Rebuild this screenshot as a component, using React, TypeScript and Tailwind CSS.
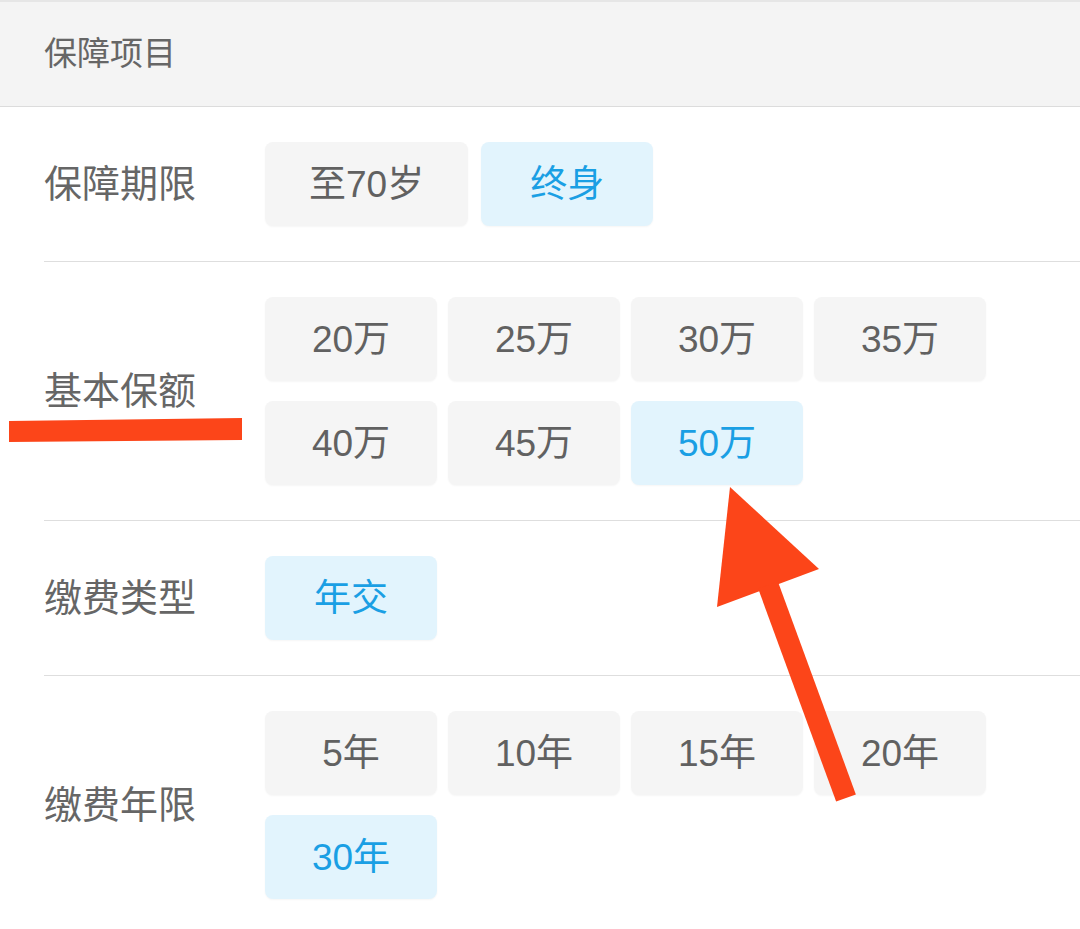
import React from 'react';

type Row = {
  label: string;
  options: string[];
  selected: string;
  wide?: boolean;
};

const rows: Row[] = [
  { label: '保障期限', options: ['至70岁', '终身'], selected: '终身', wide: true },
  {
    label: '基本保额',
    options: ['20万', '25万', '30万', '35万', '40万', '45万', '50万'],
    selected: '50万',
  },
  { label: '缴费类型', options: ['年交'], selected: '年交' },
  { label: '缴费年限', options: ['5年', '10年', '15年', '20年', '30年'], selected: '30年' },
];

const Option = ({ text, active }: { text: string; active: boolean }) => (
  <div
    className={
      active
        ? 'flex h-[84px] min-w-[172px] items-center justify-center rounded-[8px] bg-[#e2f4fd] px-[44px] pt-[2px] text-[37px] text-[#1a9fe4] shadow-[0_1px_2px_rgba(0,0,0,0.04)]'
        : 'flex h-[84px] min-w-[172px] items-center justify-center rounded-[8px] bg-[#f5f5f5] px-[44px] pt-[2px] text-[37px] text-[#616161] shadow-[0_1px_2px_rgba(0,0,0,0.04)]'
    }
  >
    {text}
  </div>
);

const App = () => {
  return (
    <div
      className="relative h-[929px] w-full overflow-hidden bg-white"
      style={{ fontFamily: '"Liberation Sans", "Noto Sans CJK SC", sans-serif' }}
    >
      {/* Header */}
      <div className="flex h-[107px] items-center border-t-2 border-b border-t-[#e6e6e6] border-b-[#dcdcdc] bg-[#f4f4f4] pl-[44px] text-[33px] text-[#666]">
        保障项目
      </div>

      {/* Option rows */}
      {rows.map((row) => (
        <div
          key={row.label}
          className="ml-[44px] flex items-center border-b border-[#dedede] py-[35px] last:border-b-0"
        >
          <div className="w-[221px] shrink-0 text-[38px] text-[#666]">{row.label}</div>
          <div
            className={
              row.wide
                ? 'flex w-[740px] flex-wrap gap-x-[13px] gap-y-[20px]'
                : 'flex w-[740px] flex-wrap gap-x-[11px] gap-y-[20px]'
            }
          >
            {row.options.map((opt) => (
              <Option key={opt} text={opt} active={opt === row.selected} />
            ))}
          </div>
        </div>
      ))}

      {/* Red annotations drawn over the screenshot */}
      <svg
        className="pointer-events-none absolute left-0 top-0"
        width="1080"
        height="929"
        viewBox="0 0 1080 929"
      >
        <polygon points="9,421 242,418 242,440 9,442" fill="#fc4519" />
        <polygon points="730,487 717,607 819,569" fill="#fc4519" />
        <line x1="768" y1="585" x2="846" y2="798" stroke="#fc4519" strokeWidth="21" />
      </svg>
    </div>
  );
};

export default App;
